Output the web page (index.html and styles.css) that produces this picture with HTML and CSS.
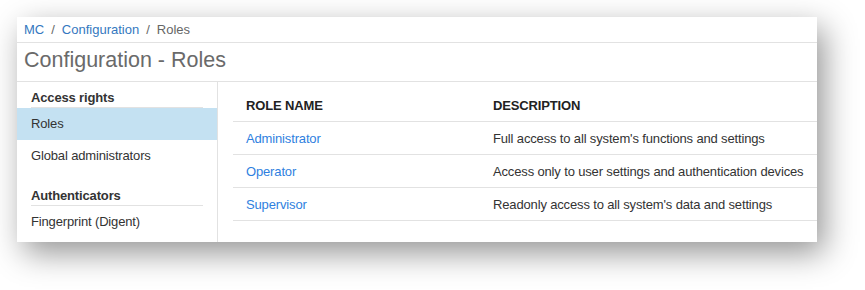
FILE: index.html
```html
<!DOCTYPE html>
<html>
<head>
<meta charset="utf-8">
<link rel="stylesheet" href="styles.css">
</head>
<body>
<div class="page">
<div class="card">
  <div class="crumbs">
    <a class="crumb-link">MC</a><span class="sep">/</span><a class="crumb-link">Configuration</a><span class="sep">/</span><span class="crumb-cur">Roles</span>
  </div>
  <div class="title">Configuration - Roles</div>
  <div class="content">
    <div class="sidebar">
      <div class="side-head">Access rights</div>
      <div class="side-item active">Roles</div>
      <div class="side-item">Global administrators</div>
      <div class="side-head second">Authenticators</div>
      <div class="side-item">Fingerprint (Digent)</div>
    </div>
    <div class="main">
      <table class="roles">
        <thead>
          <tr><th class="c1">ROLE NAME</th><th>DESCRIPTION</th></tr>
        </thead>
        <tbody>
          <tr><td class="c1"><a class="link">Administrator</a></td><td>Full access to all system's functions and settings</td></tr>
          <tr><td class="c1"><a class="link">Operator</a></td><td>Access only to user settings and authentication devices</td></tr>
          <tr><td class="c1"><a class="link">Supervisor</a></td><td>Readonly access to all system's data and settings</td></tr>
        </tbody>
      </table>
    </div>
  </div>
</div>
</div>
</body>
</html>
```
FILE: styles.css
```css
html, body { margin: 0; padding: 0; background: #fff; }
body { font-family: "Liberation Sans", Arial, sans-serif; font-size: 13px; color: #333; letter-spacing: -0.15px; }
.page { height: 290px; padding: 17px 0 0 17px; box-sizing: border-box; overflow: hidden; }
.card {
  width: 800px;
  height: 225px;
  background: #fff;
  box-shadow: 7px 11px 30px rgba(0,0,0,0.42);
  display: flex;
  flex-direction: column;
  overflow: hidden;
}
.crumbs {
  flex: 0 0 auto;
  height: 26px;
  box-sizing: border-box;
  padding: 5px 0 0 7px;
  border-bottom: 1px solid #e2e2e2;
  line-height: 15px;
  letter-spacing: 0;
}
.crumb-link { color: #3478c0; }
.crumb-cur { color: #666; }
.sep { color: #666; margin: 0 7px; }
.title {
  flex: 0 0 auto;
  height: 39px;
  box-sizing: border-box;
  padding: 4px 0 0 7px;
  font-size: 21.5px;
  line-height: 26px;
  letter-spacing: 0;
  color: #6a6a6a;
  border-bottom: 1px solid #e2e2e2;
}
.content { display: flex; flex: 1 1 auto; min-height: 0; }
.sidebar {
  width: 201px;
  flex: 0 0 auto;
  box-sizing: border-box;
  border-right: 1px solid #e2e2e2;
}
.side-head {
  margin: 0 14px;
  height: 26px;
  box-sizing: border-box;
  padding-top: 8px;
  line-height: 15px;
  font-weight: bold;
  border-bottom: 1px solid #e2e2e2;
}
.side-head.second { height: 34px; padding-top: 16px; }
.side-item {
  height: 32px;
  line-height: 32px;
  padding-left: 14px;
}
.side-item.active { background: #c4e1f2; }
.main { flex: 1; padding: 7px 0 0 15px; }
.roles { border-collapse: collapse; width: 100%; }
.roles th, .roles td {
  text-align: left;
  padding: 0;
  border-bottom: 1px solid #e2e2e2;
}
.roles th { height: 32px; font-weight: bold; color: #222; }
.roles td { height: 32px; }
.c1 { width: 247px; padding-left: 13px !important; }
.link { color: #2f7fe0; }
```
